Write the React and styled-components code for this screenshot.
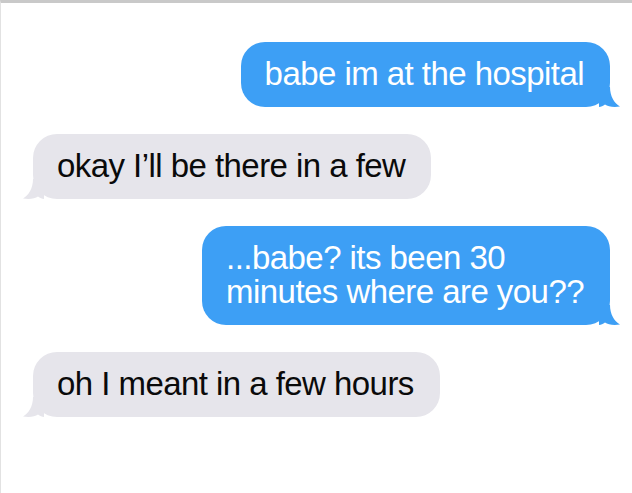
import React from "react";
import styled, { createGlobalStyle } from "styled-components";

const Global = createGlobalStyle`
  html, body { margin: 0; padding: 0; background: #fff; }
`;

const Frame = styled.div`
  box-sizing: border-box;
  width: 632px;
  height: 493px;
  border-top: 3px solid #c9c9c9;
  border-left: 1px solid #e2e2e2;
  padding: 39px 22px 0 32px;
  display: flex;
  flex-direction: column;
  gap: 27px;
  font-family: "Liberation Sans", Arial, sans-serif;
  overflow: hidden;
`;

const Row = styled.div`
  display: flex;
  justify-content: ${(p) => (p.$me ? "flex-end" : "flex-start")};
`;

const Bubble = styled.div`
  position: relative;
  background: ${(p) => (p.$me ? "#3d9ff5" : "#e6e5eb")};
  color: ${(p) => (p.$me ? "#ffffff" : "#0a0a0a")};
  border-radius: 24px;
  padding: 15px 26px 16px 24px;
  font-size: 33px;
  letter-spacing: -0.55px;
  line-height: 34px;
  white-space: nowrap;
`;

const Tail = styled.svg`
  position: absolute;
  bottom: 0;
  width: 22px;
  height: 20px;
  ${(p) => (p.$me ? "right: -11px;" : "left: -11px; transform: scaleX(-1);")}
`;

function BubbleTail({ me }) {
  return (
    <Tail $me={me} viewBox="0 0 22 20" aria-hidden="true">
      <path
        d="M0 0 H11 C11 9 15 16 21 19.5 C14 20.5 9 19.5 6 17.5 C4 19 2 20 0 20 Z"
        fill={me ? "#3d9ff5" : "#e6e5eb"}
      />
    </Tail>
  );
}

function Message({ me, children }) {
  return (
    <Row $me={me}>
      <Bubble $me={me}>
        {children}
        <BubbleTail me={me} />
      </Bubble>
    </Row>
  );
}

export default function App() {
  return (
    <>
      <Global />
      <Frame>
        <Message me>babe im at the hospital</Message>
        <Message>okay I’ll be there in a few</Message>
        <Message me>
          ...babe? its been 30
          <br />
          minutes where are you??
        </Message>
        <Message>oh I meant in a few hours</Message>
      </Frame>
    </>
  );
}
